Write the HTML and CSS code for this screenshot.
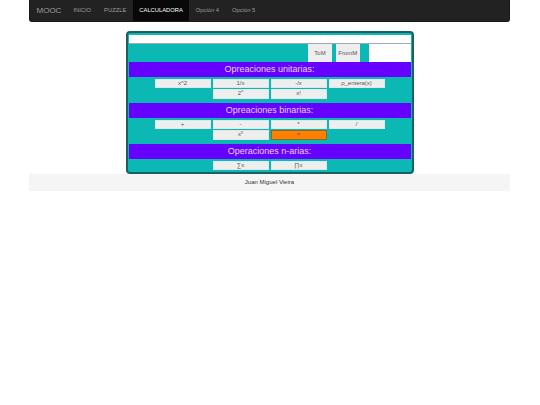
FILE: index.html
```html
<!DOCTYPE html>
<html lang="es">
<head>
    <meta charset="UTF-8">
    <title>Calculadora</title>
    <link rel="stylesheet" href="styles.css">
</head>
<body>
    <nav class="navbar">
        <a class="brand">MOOC</a>
        <a class="link">INICIO</a>
        <a class="link">PUZZLE</a>
        <a class="link active">CALCULADORA</a>
        <a class="link">Opción 4</a>
        <a class="link">Opción 5</a>
    </nav>
    <div class="calculadora">
        <div class="display"></div>
        <div class="memoria">
            <button class="mem">ToM</button>
            <button class="mem">FromM</button>
            <div class="memvalor"></div>
        </div>
        <h2 class="titulo">Opreaciones unitarias:</h2>
        <div class="teclas">
            <button>x^2</button>
            <button>1/x</button>
            <button>-/x</button>
            <button>p_entera(x)</button>
            <button class="col2">2<sup>x</sup></button>
            <button>x!</button>
        </div>
        <h2 class="titulo">Opreaciones binarias:</h2>
        <div class="teclas">
            <button>+</button>
            <button>-</button>
            <button>*</button>
            <button>/</button>
            <button class="col2">x<sup>y</sup></button>
            <button class="igual">=</button>
        </div>
        <h2 class="titulo">Operaciones n-arias:</h2>
        <div class="teclas ultima">
            <button class="col2">∑x</button>
            <button>∏x</button>
        </div>
    </div>
    <footer class="pie">Juan Miguel Vieira</footer>
</body>
</html>
```

FILE: styles.css
```css
body{
    margin: 0 30px 0 29px;
    font-family: "Liberation Sans", Arial, sans-serif;
    background-color: white;
}
.navbar{
    display: flex;
    height: 22px;
    background-color: #222222;
    border: 1px solid #181818;
    border-top: none;
    border-radius: 0 0 3px 3px;
    box-sizing: border-box;
    margin-bottom: 8.5px;
}
.brand{
    padding: 0 5.5px 0 6.5px;
    line-height: 21px;
    font-size: 8px;
    color: #9d9d9d;
}
.link{
    padding: 0 6.5px;
    line-height: 21px;
    font-size: 5.8px;
    color: #9d9d9d;
}
.active{
    color: white;
    background-color: #080808;
}
.calculadora{
    width: 288px;
    height: 143.5px;
    margin: 0 auto;
    box-sizing: border-box;
    padding: 2px 1px;
    background-color: #0cb8b4;
    border: 2px solid #1c5f63;
    border-radius: 4px;
}
.display{
    height: 8px;
    background-color: white;
    border-bottom: 1px solid #a8a8a8;
}
.memoria{
    display: flex;
    height: 18px;
    margin-bottom: 0.5px;
    justify-content: flex-end;
}
.mem{
    width: 24px;
    margin-right: 3.5px;
    padding: 0;
    border: none;
    background-color: #eeeeee;
    color: #555555;
    font-family: "Liberation Sans", Arial, sans-serif;
    font-size: 6px;
}
.mem + .mem{
    width: 24.5px;
    margin-right: 9px;
}
.memvalor{
    width: 41.5px;
    background-color: white;
}
.titulo{
    height: 14.5px;
    margin: 0;
    background-color: #6600ff;
    color: #e8d8ff;
    font-size: 9px;
    font-weight: normal;
    line-height: 14.5px;
    text-align: center;
}
.teclas{
    display: grid;
    grid-template-columns: repeat(4, 56px);
    grid-auto-rows: 9.5px;
    gap: 1px 2px;
    justify-content: center;
    padding: 2px 0 4.5px 0;
}
.ultima{
    padding-bottom: 0;
}
.teclas button{
    padding: 0;
    border: 1px solid #e2e6e6;
    background-color: #eeeeee;
    color: #555555;
    font-family: "Liberation Sans", Arial, sans-serif;
    font-size: 6px;
    line-height: 7px;
}
.teclas sup{
    font-size: 4px;
    line-height: 0;
}
.teclas .col2{
    grid-column: 2;
}
.teclas .igual{
    background-color: #ff8000;
    border-color: #8a6a20;
}
.pie{
    height: 17px;
    background-color: #f5f5f5;
    color: #333333;
    font-size: 6px;
    line-height: 17px;
    text-align: center;
}
```
